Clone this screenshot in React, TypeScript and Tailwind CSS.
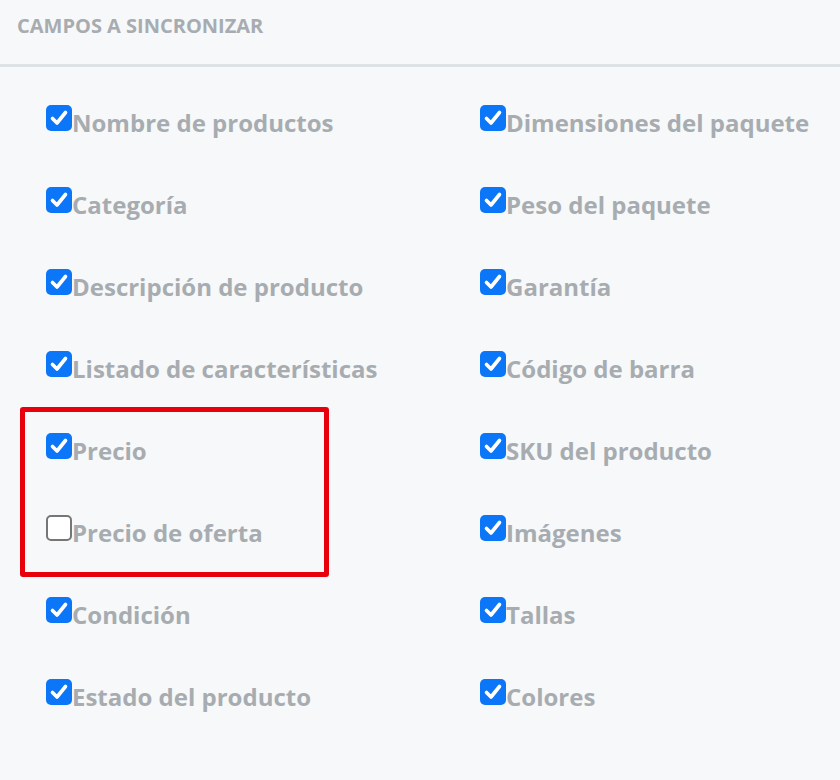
import React from "react";

const left = [
  { label: "Nombre de productos", checked: true },
  { label: "Categoría", checked: true },
  { label: "Descripción de producto", checked: true },
  { label: "Listado de características", checked: true },
  { label: "Precio", checked: true },
  { label: "Precio de oferta", checked: false },
  { label: "Condición", checked: true },
  { label: "Estado del producto", checked: true },
];

const right = [
  { label: "Dimensiones del paquete", checked: true },
  { label: "Peso del paquete", checked: true },
  { label: "Garantía", checked: true },
  { label: "Código de barra", checked: true },
  { label: "SKU del producto", checked: true },
  { label: "Imágenes", checked: true },
  { label: "Tallas", checked: true },
  { label: "Colores", checked: true },
];

const Box = ({ checked }: { checked: boolean }) =>
  checked ? (
    <span className="w-[26px] h-[26px] rounded-[5px] bg-[#0b76f7] flex items-center justify-center">
      <svg width="20" height="20" viewBox="0 0 20 20" fill="none">
        <path d="M3.5 10.5 L8 15 L16.5 4.5" stroke="white" strokeWidth="3.6" strokeLinecap="round" strokeLinejoin="round" />
      </svg>
    </span>
  ) : (
    <span className="block w-[26px] h-[26px] rounded-[5px] bg-white border-2 border-[#767676]" />
  );

const Row = ({ label, checked }: { label: string; checked: boolean }) => (
  <label className="h-[82px] flex items-center">
    <span className="flex items-start">
      <span className="block shrink-0 mt-[-6px]">
        <Box checked={checked} />
      </span>
      <span className="text-[24px] leading-none font-bold text-[#a7acb1]">{label}</span>
    </span>
  </label>
);

export default function App() {
  return (
    <div className="w-[840px] h-[780px] bg-[#f7f8f9] font-['Open_Sans',sans-serif] relative overflow-hidden">
      <div className="h-[67px] pl-[17px] pt-[11px] border-b-[3px] border-[#dfe2e5]">
        <h2 className="text-[20px] font-bold text-[#a7acb1]">CAMPOS A SINCRONIZAR</h2>
      </div>
      <div className="grid grid-cols-[434px_1fr] pl-[46px] pt-[15px]">
        <div className="flex flex-col">
          {left.map((f) => (
            <Row key={f.label} {...f} />
          ))}
        </div>
        <div className="flex flex-col">
          {right.map((f) => (
            <Row key={f.label} {...f} />
          ))}
        </div>
      </div>
      <div className="absolute left-[20px] top-[407px] w-[309px] h-[170px] border-[5px] border-[#e8000b] rounded-[3px] pointer-events-none" />
    </div>
  );
}
